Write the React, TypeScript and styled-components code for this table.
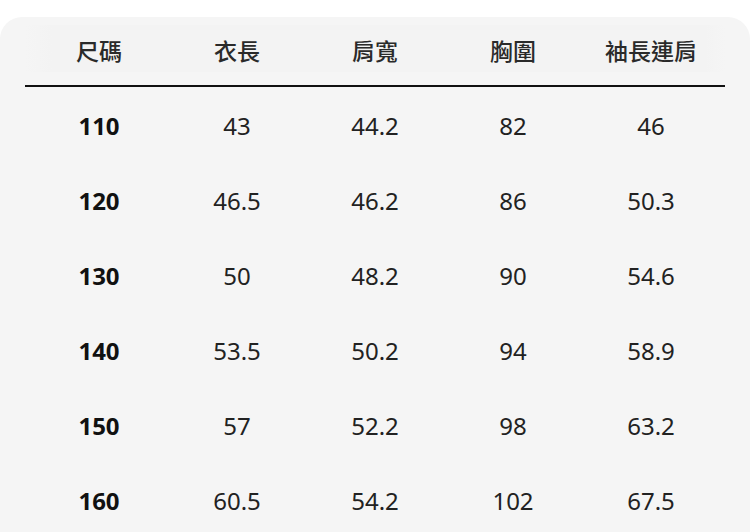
import React from "react";
import styled, { createGlobalStyle } from "styled-components";

const Global = createGlobalStyle`
  html, body { margin: 0; padding: 0; background: #ffffff; }
  body { font-family: "Noto Sans", "Noto Sans CJK TC", sans-serif; }
`;

const Card = styled.div`
  margin-top: 17px;
  background: #f5f5f5;
  border-radius: 22px 22px 0 0;
  padding: 8px 25px 0;
  height: 515px;
  box-sizing: border-box;
  overflow: hidden;
`;

const HeadWrap = styled.div`
  padding-bottom: 13px;
  border-bottom: 2px solid #111;
`;

const Grid = styled.div`
  display: grid;
  grid-template-columns: repeat(5, 1fr);
  padding: 0 5px;
`;

const HeadRow = styled(Grid)`
  height: 47px;
  align-items: center;
  background: linear-gradient(to right, #f5f5f5 0px, #f3f3f3 27px, #f3f3f3 calc(100% - 20px), #f5f5f5 100%);
`;

const HeadCell = styled.div`
  text-align: center;
  font-family: "Noto Sans CJK TC", "Noto Sans", sans-serif;
  font-size: 23px;
  font-weight: 500;
  color: #2a2a2a;
  line-height: 1;
  padding-top: 3px;
`;

const BodyRow = styled(Grid)`
  height: 75px;
  align-items: center;
`;

const Cell = styled.div<{ $bold?: boolean }>`
  text-align: center;
  font-family: "Noto Sans", sans-serif;
  font-size: 24px;
  font-weight: ${(p) => (p.$bold ? 700 : 400)};
  color: ${(p) => (p.$bold ? "#111" : "#222")};
  line-height: 1;
`;

const Body = styled.div`
  padding-top: 1px;
`;

const headers = ["尺碼", "衣長", "肩寬", "胸圍", "袖長連肩"];
const rows = [
  ["110", "43", "44.2", "82", "46"],
  ["120", "46.5", "46.2", "86", "50.3"],
  ["130", "50", "48.2", "90", "54.6"],
  ["140", "53.5", "50.2", "94", "58.9"],
  ["150", "57", "52.2", "98", "63.2"],
  ["160", "60.5", "54.2", "102", "67.5"],
];

export default function App() {
  return (
    <>
      <Global />
      <Card>
        <HeadWrap>
          <HeadRow>
            {headers.map((h) => (
              <HeadCell key={h}>{h}</HeadCell>
            ))}
          </HeadRow>
        </HeadWrap>
        <Body>
          {rows.map((r) => (
            <BodyRow key={r[0]}>
              {r.map((c, i) => (
                <Cell key={i} $bold={i === 0}>
                  {c}
                </Cell>
              ))}
            </BodyRow>
          ))}
        </Body>
      </Card>
    </>
  );
}
